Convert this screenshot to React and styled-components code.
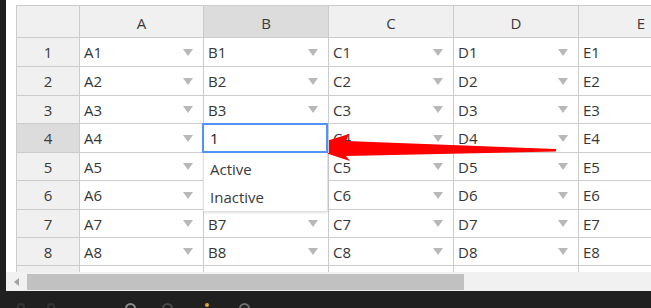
import React from "react";
import styled, { createGlobalStyle } from "styled-components";

const GlobalStyle = createGlobalStyle`
  html, body {
    margin: 0;
    padding: 0;
    background: #1f201f;
  }
  body {
    font-family: "Open Sans", "Noto Sans", sans-serif;
    color: #333;
  }
`;

const Screen = styled.div`
  position: relative;
  width: 651px;
  height: 308px;
  display: grid;
  grid-template-columns: 6px 1fr;
  grid-template-rows: 291px 17px;
  overflow: hidden;
`;

const SideStrip = styled.div`
  background: #1e1f1e;
`;

const Panel = styled.div`
  background: #fff;
  display: flex;
  flex-direction: column;
  overflow: hidden;
`;

const Viewport = styled.div`
  flex: 1;
  overflow: hidden;
  padding: 5px 0 0 10px;
`;

const Table = styled.div`
  display: inline-flex;
  flex-direction: column;
  border-top: 1px solid #ccc;
  border-left: 1px solid #ccc;
`;

const Row = styled.div`
  display: flex;
  height: ${(p) => p.$h}px;
`;

const Cell = styled.div`
  position: relative;
  flex: 0 0 ${(p) => p.$w}px;
  box-sizing: border-box;
  border-right: 1px solid #ccc;
  border-bottom: 1px solid #ccc;
  display: flex;
  align-items: center;
  justify-content: space-between;
  padding: 0 10px 0 4px;
  font-size: 15px;
  color: #363636;
  background: #fff;
  white-space: nowrap;
  z-index: ${(p) => (p.$raised ? 2 : "auto")};
`;

const HeaderCell = styled.div`
  flex: 0 0 ${(p) => p.$w}px;
  box-sizing: border-box;
  border-right: 1px solid #ccc;
  border-bottom: 1px solid #ccc;
  display: flex;
  align-items: center;
  justify-content: center;
  padding-top: ${(p) => (p.$top ? 3 : 0)}px;
  font-size: 15px;
  color: #3a3a3a;
  background: ${(p) => (p.$active ? "#dcdcdc" : "#f0f0f0")};
`;

const DropArrow = styled.span`
  width: 0;
  height: 0;
  margin-left: auto;
  border-left: 5px solid transparent;
  border-right: 5px solid transparent;
  border-top: 7px solid #b8b8b8;
  flex: 0 0 auto;
`;

const Editor = styled.div`
  position: absolute;
  left: -2px;
  top: -1px;
  width: 126px;
  height: 30px;
  box-sizing: border-box;
  border: 2px solid #5292f7;
  background: #fff;
  display: flex;
  align-items: center;
  padding-left: 6px;
  font-size: 15px;
  color: #222;
`;

const OptionList = styled.div`
  position: absolute;
  left: -1px;
  top: 29px;
  width: 125px;
  height: 59px;
  box-sizing: border-box;
  padding-top: 2px;
  background: #fff;
  border: 1px solid #e2e2e2;
  border-top: none;
  box-shadow: 0 1px 2px rgba(0, 0, 0, 0.12);
`;

const Option = styled.div`
  height: 28px;
  display: flex;
  align-items: center;
  padding-left: 6px;
  font-size: 15px;
  color: #3a3a3a;
`;

const ScrollBar = styled.div`
  height: 19px;
  display: flex;
  background: #f1f1f1;
`;

const ScrollButton = styled.div`
  flex: 0 0 21px;
  display: flex;
  align-items: center;
  justify-content: center;
`;

const LeftTriangle = styled.span`
  width: 0;
  height: 0;
  border-top: 4px solid transparent;
  border-bottom: 4px solid transparent;
  border-right: 5px solid #a3a3a3;
`;

const Thumb = styled.div`
  width: 437px;
  margin: 2px 0 1px;
  background: #c1c1c1;
`;

const Taskbar = styled.div`
  grid-column: 1 / 3;
  background: #1f201f;
  position: relative;
`;

const TrayIcon = styled.span`
  position: absolute;
  left: ${(p) => p.$x}px;
  top: 12px;
  width: ${(p) => p.$size}px;
  height: ${(p) => p.$size}px;
  border-radius: 50%;
  border: 2px solid ${(p) => p.$color};
  box-sizing: border-box;
`;

const Annotation = styled.svg`
  position: absolute;
  left: 0;
  top: 0;
  pointer-events: none;
`;

const columns = [
  { key: "A", w: 124 },
  { key: "B", w: 125 },
  { key: "C", w: 125 },
  { key: "D", w: 125 },
  { key: "E", w: 125 },
];

const rowHeights = [29, 29, 28, 29, 28, 29, 28, 28, 29];

// cells covered by the open editor / option list show no own text
const hidden = ["B4", "B5", "B6"];

export default function App() {
  return (
    <>
      <GlobalStyle />
      <Screen>
        <SideStrip />
        <Panel>
          <Viewport>
            <Table>
              <Row $h={32}>
                <HeaderCell $w={63} />
                {columns.map((c) => (
                  <HeaderCell key={c.key} $w={c.w} $active={c.key === "B"} $top>
                    {c.key}
                  </HeaderCell>
                ))}
              </Row>
              {rowHeights.map((h, i) => {
                const n = i + 1;
                const partial = n === 9;
                return (
                  <Row key={n} $h={h}>
                    <HeaderCell $w={63} $active={n === 4}>
                      {partial ? "" : n}
                    </HeaderCell>
                    {columns.map((c) => {
                      const id = c.key + n;
                      const editing = id === "B4";
                      const showText = !partial && !hidden.includes(id);
                      return (
                        <Cell key={c.key} $w={c.w} $raised={editing}>
                          {showText && <span>{id}</span>}
                          {!partial && <DropArrow />}
                          {editing && (
                            <>
                              <Editor>1</Editor>
                              <OptionList>
                                <Option>Active</Option>
                                <Option>Inactive</Option>
                              </OptionList>
                            </>
                          )}
                        </Cell>
                      );
                    })}
                  </Row>
                );
              })}
            </Table>
          </Viewport>
          <ScrollBar>
            <ScrollButton>
              <LeftTriangle />
            </ScrollButton>
            <Thumb />
          </ScrollBar>
        </Panel>
        <Taskbar>
          <TrayIcon $x={17} $size={8} $color="#333" />
          <TrayIcon $x={47} $size={8} $color="#333" />
          <TrayIcon $x={125} $size={11} $color="#8c8c8c" />
          <TrayIcon $x={162} $size={11} $color="#4a4a4a" />
          <TrayIcon $x={205} $size={4} $color="#e0a53a" />
          <TrayIcon $x={239} $size={11} $color="#6e6e6e" />
        </Taskbar>
        <Annotation width="651" height="308" viewBox="0 0 651 308">
          <polygon
            points="307,147 349,134 346,141 556,149 556,151.5 346,156 350,161"
            fill="#ff0000"
          />
        </Annotation>
      </Screen>
    </>
  );
}
